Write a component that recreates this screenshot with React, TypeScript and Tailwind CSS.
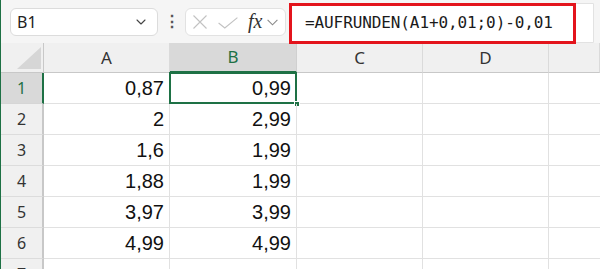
import React from 'react';
import { ChevronDown } from 'lucide-react';

const rows: [string, string][] = [
  ['0,87', '0,99'],
  ['2', '2,99'],
  ['1,6', '1,99'],
  ['1,88', '1,99'],
  ['3,97', '3,99'],
  ['4,99', '4,99'],
  ['', ''],
];

const cols = ['A', 'B', 'C', 'D', ''];

const App: React.FC = () => {
  return (
    <div className="w-[600px] h-[269px] overflow-hidden bg-white border-l border-[#1e7145] font-['Liberation_Sans',sans-serif]">
      {/* Top bar: name box + formula bar */}
      <div className="h-[43px] bg-[#f5f5f5] flex items-center pl-[9px] pr-[6px]">
        <div className="w-[148px] h-[28px] bg-white border border-[#dcdcdc] rounded-md flex items-center justify-between pl-[6px] pr-[8px]">
          <span className="text-[16px] text-[#222] font-['Noto_Sans',sans-serif]">B1</span>
          <ChevronDown size={16} strokeWidth={1.6} className="text-[#444]" />
        </div>
        <div className="w-[27px] flex justify-center text-[#555] text-[16px] leading-none font-bold">⋮</div>
        <div className="w-[101px] h-[28px] bg-white border border-[#e2e2e2] rounded-md flex items-center pl-[7px]">
          {/* cancel */}
          <svg width="14" height="14" viewBox="0 0 14 14" className="text-[#c2c2c2]">
            <path d="M0.5 0.5 L13.5 13.5 M13.5 0.5 L0.5 13.5" stroke="currentColor" strokeWidth="1.1" fill="none" />
          </svg>
          {/* enter */}
          <svg width="20" height="12" viewBox="0 0 20 12" className="text-[#c2c2c2] ml-[11px] mt-[2px]">
            <path d="M0.6 6 L6.8 11 L19.4 0.6" stroke="currentColor" strokeWidth="1.1" fill="none" />
          </svg>
          <span className="ml-[10px] text-[20px] italic text-[#333] font-['Liberation_Serif',serif] leading-none mb-[1px]">fx</span>
          <svg width="11" height="7" viewBox="0 0 11 7" className="text-[#8a8a8a] ml-[5px] mt-[2px]">
            <path d="M0.6 0.8 L5.5 5.8 L10.4 0.8" stroke="currentColor" strokeWidth="1.1" fill="none" />
          </svg>
        </div>
        <div className="relative flex-1 ml-[3px] h-[40px] mt-[3px] bg-white border border-[#e2e2e2] rounded-l-md flex items-center pl-[15px]">
          <span className="text-[16px] text-[#1a1a1a] font-['DejaVu_Sans_Mono',monospace] tracking-[-0.1px]">=AUFRUNDEN(A1+0,01;0)-0,01</span>
          <div className="absolute left-[-1px] top-[-1px] w-[287px] h-[41px] border-[3px] border-[#e3141c]" />
        </div>
      </div>

      {/* Sheet grid */}
      <div className="grid grid-cols-[43px_126px_127px_126px_126px_1fr]">
        <div className="relative h-[30px] bg-[#f0f0f0] border-r border-b border-[#c8c8c8]">
          <div className="absolute right-[2px] bottom-[3px] w-0 h-0 border-l-[24px] border-l-transparent border-b-[22px] border-b-[#d6d6d6]" />
        </div>
        {cols.map((c, i) => (
          <div
            key={i}
            className={
              c === 'B'
                ? 'h-[30px] bg-[#d9d9d9] border-r border-[#d0d0d0] border-b-2 border-b-[#1e7145] flex items-center justify-center text-[17px] text-[#1e7145] font-["Noto_Sans",sans-serif]'
                : 'h-[30px] bg-[#f0f0f0] border-r border-[#dadada] border-b border-b-[#c8c8c8] flex items-center justify-center text-[17px] text-[#333] font-["Noto_Sans",sans-serif]'
            }
          >
            {c}
          </div>
        ))}

        {rows.map(([a, b], r) => (
          <React.Fragment key={r}>
            <div
              className={
                r === 0
                  ? 'h-[31px] bg-[#d9d9d9] border-r-2 border-[#1e7145] border-b border-b-[#d6d6d6] flex items-center justify-center text-[16px] text-[#1e7145] font-["Noto_Sans",sans-serif]'
                  : 'h-[31px] bg-[#f0f0f0] border-r-2 border-[#c8c8c8] border-b border-b-[#dcdcdc] flex items-center justify-center text-[16px] text-[#333] font-["Noto_Sans",sans-serif]'
              }
            >
              {r + 1}
            </div>
            <div className="h-[31px] border-r border-b border-[#e1e1e1] flex items-center justify-end pr-[5px] text-[20px] text-[#111]">
              {a}
            </div>
            <div className="relative h-[31px] border-r border-b border-[#e1e1e1] flex items-center justify-end pr-[5px] text-[20px] text-[#111]">
              {b}
              {r === 0 && (
                <>
                  <div className="absolute left-[-1px] top-[-1px] right-[-1px] bottom-[-1px] border-2 border-[#1e7145]" />
                  <div className="absolute right-[-4px] bottom-[-4px] w-[6px] h-[6px] bg-[#1e7145] border border-white" />
                </>
              )}
            </div>
            <div className="h-[31px] border-r border-b border-[#e1e1e1]" />
            <div className="h-[31px] border-r border-b border-[#e1e1e1]" />
            <div className="h-[31px] border-b border-[#e1e1e1]" />
          </React.Fragment>
        ))}
      </div>
    </div>
  );
};

export default App;
